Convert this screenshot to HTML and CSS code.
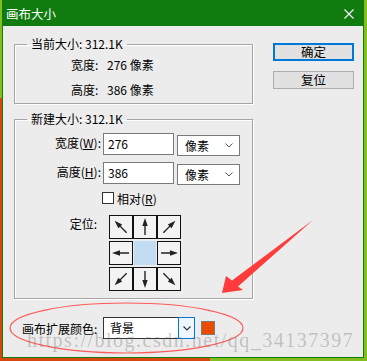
FILE: index.html
```html
<!DOCTYPE html>
<html lang="zh-CN">
  <head>
    <meta charset="UTF-8" />
    <title>画布大小</title>
    <link rel="stylesheet" href="styles.css">
  </head>
  <body>
    <svg width="0" height="0" class="defs">
      <defs>
        <g id="arrow-up">
          <line x1="12" y1="20" x2="12" y2="9" stroke="#222" stroke-width="1.4" />
          <polygon points="12,3 9.3,11 14.7,11" fill="#222" />
        </g>
      </defs>
    </svg>

    <div class="window">
      <div class="titlebar">
        <span class="title">画布大小</span>
        <svg class="close" width="10" height="10" viewBox="0 0 10 10">
          <path d="M0.5 0.5 L9.5 9.5 M9.5 0.5 L0.5 9.5" stroke="#fff" stroke-width="1.1" fill="none" />
        </svg>
      </div>

      <div class="content">
        <div class="top">
          <div class="groups">
            <fieldset class="group current">
              <legend>当前大小: 312.1K</legend>
              <div class="info-row"><span class="info-label">宽度:</span><span>276 像素</span></div>
              <div class="info-row"><span class="info-label">高度:</span><span>386 像素</span></div>
            </fieldset>

            <fieldset class="group new">
              <legend>新建大小: 312.1K</legend>
              <div class="field-row">
                <label class="field-label">宽度(<u>W</u>):</label>
                <input class="text-input" type="text" value="276" />
                <div class="dropdown">
                  <span>像素</span>
                  <svg class="chevron" width="8" height="5" viewBox="0 0 8 5"><polyline points="0.5,0.5 4,4 7.5,0.5" fill="none" stroke="#555" stroke-width="1" /></svg>
                </div>
              </div>
              <div class="field-row">
                <label class="field-label">高度(<u>H</u>):</label>
                <input class="text-input" type="text" value="386" />
                <div class="dropdown">
                  <span>像素</span>
                  <svg class="chevron" width="8" height="5" viewBox="0 0 8 5"><polyline points="0.5,0.5 4,4 7.5,0.5" fill="none" stroke="#555" stroke-width="1" /></svg>
                </div>
              </div>
              <div class="check-row">
                <span class="checkbox"></span>
                <span>相对(<u>R</u>)</span>
              </div>
              <div class="anchor-row">
                <span class="anchor-label">定位:</span>
                <div class="anchor-grid">
                  <div class="cell"><svg class="rot-nw" width="24" height="24" viewBox="0 0 24 24"><use href="#arrow-up" /></svg></div>
                  <div class="cell"><svg width="24" height="24" viewBox="0 0 24 24"><use href="#arrow-up" /></svg></div>
                  <div class="cell"><svg class="rot-ne" width="24" height="24" viewBox="0 0 24 24"><use href="#arrow-up" /></svg></div>
                  <div class="cell"><svg class="rot-w" width="24" height="24" viewBox="0 0 24 24"><use href="#arrow-up" /></svg></div>
                  <div class="cell center"></div>
                  <div class="cell"><svg class="rot-e" width="24" height="24" viewBox="0 0 24 24"><use href="#arrow-up" /></svg></div>
                  <div class="cell"><svg class="rot-sw" width="24" height="24" viewBox="0 0 24 24"><use href="#arrow-up" /></svg></div>
                  <div class="cell"><svg class="rot-s" width="24" height="24" viewBox="0 0 24 24"><use href="#arrow-up" /></svg></div>
                  <div class="cell"><svg class="rot-se" width="24" height="24" viewBox="0 0 24 24"><use href="#arrow-up" /></svg></div>
                </div>
              </div>
            </fieldset>
          </div>

          <div class="buttons">
            <button class="btn primary">确定</button>
            <button class="btn">复位</button>
          </div>
        </div>

        <div class="extend-row">
          <span class="extend-label">画布扩展颜色:</span>
          <div class="combo">
            <span class="combo-value">背景</span>
            <span class="combo-button">
              <svg width="8" height="5" viewBox="0 0 8 5"><polyline points="0.5,0.5 4,4 7.5,0.5" fill="none" stroke="#333" stroke-width="1.1" /></svg>
            </span>
          </div>
          <span class="swatch"></span>
        </div>
      </div>
    </div>

    <svg class="annotation" width="367" height="361" viewBox="0 0 367 361">
      <ellipse cx="126.5" cy="328" rx="116.5" ry="25" fill="none" stroke="#ff5a5a" stroke-width="1.2" />
      <polygon points="222,293 226,276 232,280.5 313,220 238,286.5 243,290" fill="#ff3b3b" />
    </svg>
    <div class="watermark">https://blog.csdn.net/qq_34137397</div>
  </body>
</html>
```

FILE: styles.css
```css
body {
  margin: 0;
  width: 367px;
  height: 361px;
  position: relative;
  overflow: hidden;
  font-family: "Noto Sans CJK SC", "Noto Sans", sans-serif;
  font-size: 12px;
  color: #000;
  background: linear-gradient(#d8480e, #d8480e) 0 98px / 210px 100% no-repeat, #84be1c;
}

.defs {
  position: absolute;
}

.window {
  margin-left: 2px;
  width: 362px;
  height: 358px;
  box-sizing: border-box;
  border: 1px solid #107c10;
  background: #ececec;
  display: flex;
  flex-direction: column;
}

.titlebar {
  height: 25px;
  background: #107c10;
  display: flex;
  align-items: center;
  justify-content: space-between;
  padding: 0 9px 0 3px;
  color: #fff;
}

.title {
  font-size: 12.5px;
  line-height: 16px;
}

.close {
  display: block;
}

.content {
  flex: 1;
  padding: 10px 0 0 11px;
}

.top {
  display: flex;
}

.groups {
  width: 239px;
}

.group {
  margin: 0;
  padding: 0;
  border: 1px solid #a5a5a5;
  box-shadow: 1px 1px 0 #fff, inset 1px 1px 0 #fff;
  min-width: 0;
}

.group legend {
  margin-left: 12px;
  padding: 0 4px;
  line-height: 16px;
}

.current {
  padding: 3px 0;
}

.info-row {
  display: flex;
  height: 20px;
  line-height: 20px;
  padding-left: 56px;
}

.info-row + .info-row {
  margin-top: 5px;
}

.info-label {
  width: 36px;
}

.new {
  margin-top: 7px;
  padding: 6px 0 7px 0;
}

.field-row {
  display: flex;
  align-items: flex-start;
  height: 22px;
}

.field-row + .field-row {
  margin-top: 7px;
}

.field-label {
  width: 86px;
  text-align: right;
  line-height: 20px;
}

.text-input {
  margin: 0 0 0 2px;
  width: 71px;
  height: 22px;
  box-sizing: border-box;
  border: 1px solid #7a7a7a;
  background: #fff;
  padding: 0 0 2px 4px;
  font: inherit;
  color: #000;
  outline: none;
}

.dropdown {
  margin: 2px 0 0 3px;
  width: 63px;
  height: 21px;
  box-sizing: border-box;
  border: 1px solid #7a7a7a;
  background: #fff;
  display: flex;
  align-items: center;
  justify-content: space-between;
  padding: 0 6px 0 7px;
  line-height: 18px;
}

.chevron {
  display: block;
}

.check-row {
  display: flex;
  align-items: center;
  margin-top: 6px;
  height: 16px;
  padding-left: 87px;
}

.checkbox {
  width: 12px;
  height: 12px;
  box-sizing: border-box;
  border: 1px solid #333;
  background: #fff;
  margin-right: 3px;
}

.anchor-row {
  display: flex;
  margin-top: 9px;
}

.anchor-label {
  width: 82px;
  text-align: right;
  line-height: 18px;
}

.anchor-grid {
  margin-left: 12px;
  display: grid;
  grid-template-columns: repeat(3, 24px);
  grid-auto-rows: 24px;
  row-gap: 2px;
}

.cell {
  box-sizing: border-box;
  border: 1px solid #111;
  background: #f3f3f3;
  display: flex;
  align-items: center;
  justify-content: center;
  overflow: hidden;
}

.cell svg {
  display: block;
  flex: none;
}

.cell.center {
  border: none;
  margin: 0 1px;
  background: #c2dcf2;
}

.rot-nw { transform: rotate(-45deg); }
.rot-ne { transform: rotate(45deg); }
.rot-w { transform: rotate(-90deg); }
.rot-e { transform: rotate(90deg); }
.rot-sw { transform: rotate(-135deg); }
.rot-s { transform: rotate(180deg); }
.rot-se { transform: rotate(135deg); }

.buttons {
  margin-left: 20px;
  padding-top: 7px;
  display: flex;
  flex-direction: column;
  gap: 10px;
}

.btn {
  width: 81px;
  height: 18px;
  box-sizing: border-box;
  border: 1px solid #adadad;
  background: #e1e1e1;
  font: inherit;
  font-size: 12.5px;
  line-height: 14px;
  padding: 0;
  color: #000;
}

.btn.primary {
  border: 2px solid #0078d7;
}

.extend-row {
  display: flex;
  align-items: center;
  margin-top: 18px;
  padding-left: 8px;
}

.extend-label {
  width: 81px;
}

.combo {
  width: 92px;
  height: 22px;
  display: flex;
}

.combo-value {
  flex: 1;
  box-sizing: border-box;
  border: 1px solid #333;
  border-right: none;
  background: #fff;
  padding-left: 6px;
  line-height: 20px;
}

.combo-button {
  width: 17px;
  box-sizing: border-box;
  border: 1px solid #0078d7;
  background: #eef5fc;
  display: flex;
  align-items: center;
  justify-content: center;
}

.swatch {
  margin-left: 6px;
  width: 14px;
  height: 14px;
  box-sizing: border-box;
  border: 1px solid #7a7a7a;
  background: #e84a00;
}

.annotation {
  position: absolute;
  left: 0;
  top: 0;
  pointer-events: none;
}

.watermark {
  position: absolute;
  left: 27px;
  top: 330px;
  font-family: "Liberation Serif", serif;
  font-size: 20px;
  line-height: 20px;
  letter-spacing: 1.5px;
  color: rgba(110, 110, 110, 0.35);
  pointer-events: none;
}
```
